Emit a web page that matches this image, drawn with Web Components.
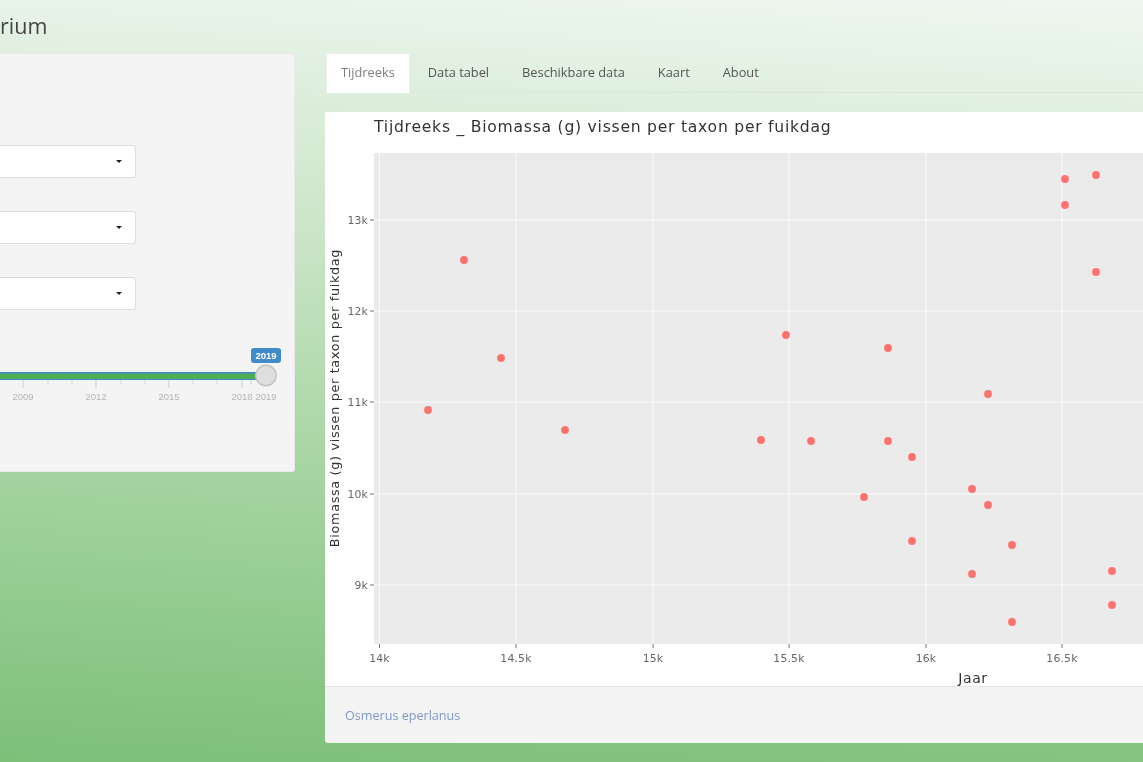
<!DOCTYPE html>
<html lang="nl">
<head>
<meta charset="utf-8">
<title>Tijdreeks</title>
<style>
html, body { margin: 0; height: 100%; overflow: hidden; }
body { font-family: "Open Sans", sans-serif; color: #555; }
</style>
</head>
<body>
<vis-app>
  <vis-header slot="header">rium</vis-header>
  <vis-sidebar slot="side">
    <vis-select></vis-select>
    <vis-select></vis-select>
    <vis-select></vis-select>
    <vis-slider></vis-slider>
  </vis-sidebar>
  <vis-tabs slot="tabs"></vis-tabs>
  <vis-plot slot="main"></vis-plot>
  <vis-footer slot="main">Osmerus eperlanus</vis-footer>
</vis-app>

<script>
class VisApp extends HTMLElement {
    constructor() {
        super();
        this.attachShadow({mode: 'open'}).innerHTML = `
<style>
:host {
    display: block;
    width: 1143px;
    height: 762px;
    overflow: hidden;
    background: linear-gradient(183deg, #eff7f0 0%, #cfe7cc 30%, #a7d5a2 62%, #7cc07a 100%);
    filter: blur(0.6px);
}
.head { height: 53px; }
.cols { display: flex; align-items: flex-start; }
.left { width: 295px; flex: none; }
.right { width: 818px; flex: none; margin-left: 30px; }
.tabs { height: 40px; margin-bottom: 19px; }
</style>
<div class="head"><slot name="header"></slot></div>
<div class="cols">
    <div class="left"><slot name="side"></slot></div>
    <div class="right">
        <div class="tabs"><slot name="tabs"></slot></div>
        <slot name="main"></slot>
    </div>
</div>`;
    }
}

class VisHeader extends HTMLElement {
    constructor() {
        super();
        this.attachShadow({mode: 'open'}).innerHTML = `
<style>
:host {
    display: block;
    padding-top: 12px;
    font: 21.5px/28px "Open Sans", sans-serif;
    color: #444;
}
</style>
<slot></slot>`;
    }
}

class VisSidebar extends HTMLElement {
    constructor() {
        super();
        this.attachShadow({mode: 'open'}).innerHTML = `
<style>
:host {
    display: block;
    box-sizing: border-box;
    height: 419px;
    padding: 91px 0 0 0;
    background: #f4f4f4;
    border: 1px solid #e9e9e9;
    border-left: none;
    border-radius: 0 3px 3px 0;
}
</style>
<slot></slot>`;
    }
}

class VisSelect extends HTMLElement {
    constructor() {
        super();
        this.attachShadow({mode: 'open'}).innerHTML = `
<style>
:host {
    display: flex;
    align-items: center;
    justify-content: flex-end;
    box-sizing: border-box;
    width: 136px;
    height: 33px;
    margin-bottom: 33px;
    padding-right: 13px;
    background: #fff;
    border: 1px solid #ddd;
    border-left: none;
    border-radius: 0 3px 3px 0;
}
.caret {
    width: 0;
    height: 0;
    border: 3.2px solid transparent;
    border-top-color: #222;
    border-bottom: none;
}
</style>
<span class="caret"></span>`;
    }
}

class VisSlider extends HTMLElement {
    constructor() {
        super();
        const major = [[23, 2009], [96, 2012], [169, 2015], [242, 2018]];
        const minor = [48, 72, 121, 145, 193, 217, 251];
        let ticks = major.map(m => `<line x1="${m[0]}" x2="${m[0]}" y1="7" y2="16" stroke="#b7d2ec"/>
            <text x="${m[0]}" y="28">${m[1]}</text>`).join("");
        ticks += minor.map(x => `<line x1="${x}" x2="${x}" y1="7" y2="12" stroke="#d4d4d4"/>`).join("");
        this.attachShadow({mode: 'open'}).innerHTML = `
<style>
:host { display: block; margin-top: 38px; }
.wrap { position: relative; width: 294px; height: 60px; }
.badge {
    position: absolute;
    left: 251px;
    top: 0;
    width: 30px;
    height: 15px;
    border-radius: 3px;
    background: #428bca;
    color: #fff;
    font: bold 9.5px/15px "Liberation Sans", sans-serif;
    text-align: center;
}
svg { position: absolute; left: 0; top: 24px; overflow: visible; }
text { font: 9.5px "Liberation Sans", sans-serif; fill: #b4b4b4; text-anchor: middle; }
</style>
<div class="wrap">
    <svg width="294" height="36" viewBox="0 0 294 36">
        ${ticks}
        <text x="266" y="28">2019</text>
        <rect x="0" y="0" width="262" height="8" fill="#428bca"/>
        <rect x="0" y="1.5" width="262" height="5.5" fill="#4fae55"/>
        <circle cx="266" cy="3.5" r="10.2" fill="#dedede" stroke="#c4c4c4" stroke-width="1.5"/>
    </svg>
    <div class="badge">2019</div>
</div>`;
    }
}

class VisTabs extends HTMLElement {
    constructor() {
        super();
        const labels = ["Tijdreeks", "Data tabel", "Beschikbare data", "Kaart", "About"];
        this.attachShadow({mode: 'open'}).innerHTML = `
<style>
:host {
    display: flex;
    height: 40px;
    box-sizing: border-box;
    border-bottom: 1px solid #dbe8d9;
    font: 12.8px/17px "Open Sans", sans-serif;
}
a {
    box-sizing: border-box;
    height: 40px;
    padding: 11px 15px 0;
    margin-right: 3px;
    border-radius: 3px 3px 0 0;
    color: #555;
}
a.active {
    margin-left: 1px;
    background: #fff;
    color: #808080;
    border: 1px solid #eee;
    border-bottom: none;
    padding: 10px 14px 0;
}
</style>
${labels.map((l, i) => `<a class="${i == 0 ? "active" : ""}">${l}</a>`).join("")}`;
    }
}

class VisPlot extends HTMLElement {
    constructor() {
        super();
        const points = [[1065,179],[1096,175],[1065,205],[1096,272],[464,260],[786,335],[888,348],[501,358],
            [988,394],[428,410],[565,430],[761,440],[811,441],[888,441],[912,457],[864,497],[972,489],[988,505],
            [912,541],[1012,545],[972,574],[1112,571],[1112,605],[1012,622]];
        const xTicks = [[379.5,"14k"],[516,"14.5k"],[653,"15k"],[789,"15.5k"],[926,"16k"],[1062,"16.5k"]];
        const yTicks = [[220,"13k"],[311,"12k"],[402,"11k"],[494,"10k"],[585,"9k"]];
        // coordinates above are page coordinates, the card starts at 325,112
        const px = x => x - 325, py = y => y - 112;
        this.attachShadow({mode: 'open'}).innerHTML = `
<style>
:host { display: block; height: 574px; background: #fff; overflow: hidden; }
h2 {
    margin: 0;
    height: 30px;
    padding-left: 49px;
    font: normal 15.6px/30px "DejaVu Sans", sans-serif;
    letter-spacing: 0.75px;
    color: #333;
}
svg { display: block; }
text { font-family: "DejaVu Sans", sans-serif; }
.tick { font-size: 10.8px; fill: #666; letter-spacing: 0.2px; }
.lab { font-size: 12.8px; fill: #333; letter-spacing: 0.67px; }
.jaar { font-size: 14px; letter-spacing: 0.6px; }
</style>
<h2>Tijdreeks _ Biomassa (g) vissen per taxon per fuikdag</h2>
<svg width="818" height="544" viewBox="0 30 818 544">
    <rect x="49" y="41" width="769" height="491" fill="#ebebeb"/>
    ${xTicks.map(t => `<line x1="${px(t[0])}" x2="${px(t[0])}" y1="41" y2="532" stroke="#fbfbfb"/>
        <line x1="${px(t[0])}" x2="${px(t[0])}" y1="532" y2="536" stroke="#777"/>
        <text class="tick" x="${px(t[0])}" y="550" text-anchor="middle">${t[1]}</text>`).join("")}
    ${yTicks.map(t => `<line x1="49" x2="818" y1="${py(t[0])}" y2="${py(t[0])}" stroke="#fbfbfb"/>
        <line x1="45" x2="49" y1="${py(t[0])}" y2="${py(t[0])}" stroke="#777"/>
        <text class="tick" x="43" y="${py(t[0]) + 4}" text-anchor="end">${t[1]}</text>`).join("")}
    ${points.map(p => `<circle cx="${px(p[0])}" cy="${py(p[1])}" r="3.9" fill="#fd726e"/>`).join("")}
    <text class="lab jaar" x="648" y="571" text-anchor="middle">Jaar</text>
    <text class="lab" text-anchor="middle" transform="translate(14 286) rotate(-90)">Biomassa (g) vissen per taxon per fuikdag</text>
</svg>`;
    }
}

class VisFooter extends HTMLElement {
    constructor() {
        super();
        this.attachShadow({mode: 'open'}).innerHTML = `
<style>
:host {
    display: block;
    box-sizing: border-box;
    height: 57px;
    padding: 20px 20px 0;
    background: #f4f4f4;
    border-top: 1px solid #e3e3e3;
    border-radius: 0 0 0 3px;
    font: 12.6px/17px "Open Sans", sans-serif;
    color: #7d99c8;
}
</style>
<slot></slot>`;
    }
}

customElements.define("vis-app", VisApp);
customElements.define("vis-header", VisHeader);
customElements.define("vis-sidebar", VisSidebar);
customElements.define("vis-select", VisSelect);
customElements.define("vis-slider", VisSlider);
customElements.define("vis-tabs", VisTabs);
customElements.define("vis-plot", VisPlot);
customElements.define("vis-footer", VisFooter);
</script>
</body>
</html>
